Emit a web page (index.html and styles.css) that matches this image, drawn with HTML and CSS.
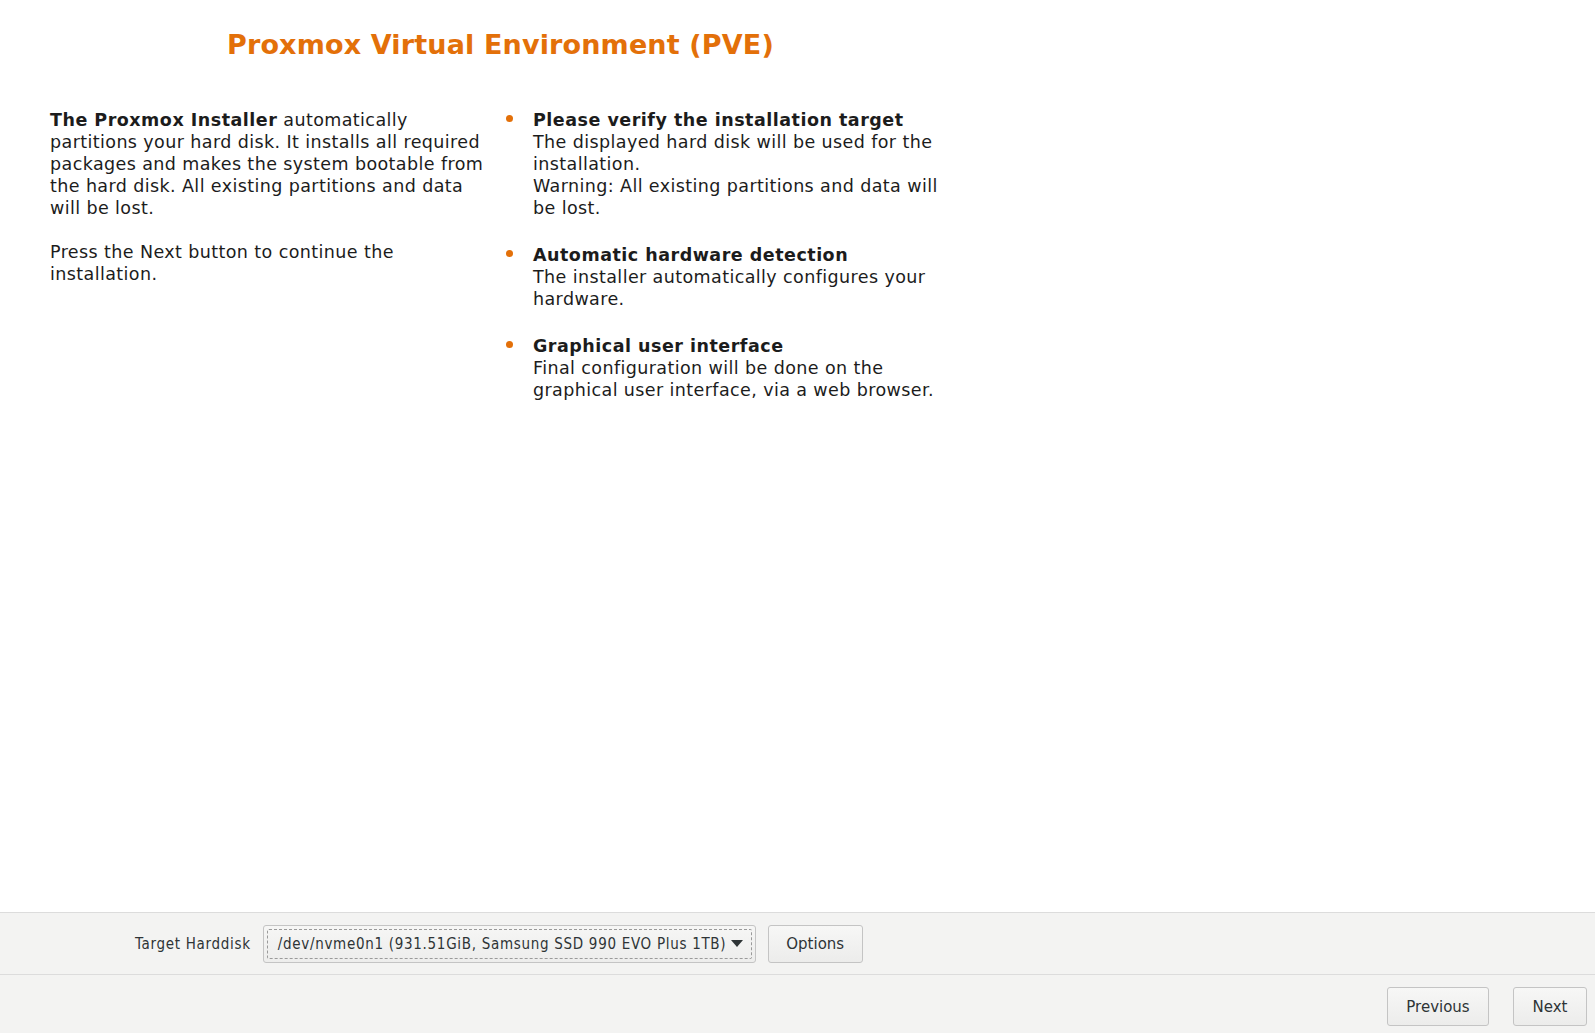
FILE: index.html
```html
<!DOCTYPE html>
<html>
<head>
<meta charset="utf-8">
<link rel="stylesheet" href="styles.css">
</head>
<body>
<div class="page">
  <main class="content">
    <h1 class="title">Proxmox Virtual Environment (PVE)</h1>
    <div class="columns">
      <div class="intro">
        <p><b>The Proxmox Installer</b> automatically partitions your hard disk. It installs all required packages and makes the system bootable from the hard disk. All existing partitions and data will be lost.</p>
        <p>Press the Next button to continue the installation.</p>
      </div>
      <ul class="features">
        <li><b>Please verify the installation target</b><br>The displayed hard disk will be used for the installation.<br>Warning: All existing partitions and data will be lost.</li>
        <li><b>Automatic hardware detection</b><br>The installer automatically configures your hardware.</li>
        <li><b>Graphical user interface</b><br>Final configuration will be done on the graphical user interface, via a web browser.</li>
      </ul>
    </div>
  </main>
  <div class="target-bar">
    <span class="label">Target Harddisk</span>
    <div class="combo"><span class="combo-inner"><span class="combo-text">/dev/nvme0n1 (931.51GiB, Samsung SSD 990 EVO Plus 1TB)</span><span class="arrow"></span></span></div>
    <button class="btn options">Options</button>
  </div>
  <div class="nav-bar">
    <button class="btn prev">Previous</button>
    <button class="btn next">Next</button>
  </div>
</div>
</body>
</html>
```
FILE: styles.css
```css
html, body {
  margin: 0;
  padding: 0;
  background: #ffffff;
}
.page {
  width: 1595px;
  height: 1033px;
  display: flex;
  flex-direction: column;
  font-family: "DejaVu Sans", sans-serif;
  color: #1c1c1c;
}
.content {
  height: 912px;
  box-sizing: border-box;
  padding: 0 0 0 50px;
}
.title {
  margin: 26px 0 0 177px;
  font-family: "DejaVu Sans", sans-serif;
  font-weight: bold;
  font-size: 27px;
  letter-spacing: 0.15px;
  line-height: 38px;
  color: #e37009;
}
.columns {
  display: flex;
  margin-top: 45px;
  font-size: 17.5px;
  letter-spacing: 0.4px;
  line-height: 22px;
}
.columns b {
  letter-spacing: 0.5px;
}
.intro {
  width: 440px;
}
.intro p {
  margin: 0 0 22px 0;
}
.features {
  list-style: none;
  margin: 0 0 0 20px;
  padding: 0 0 0 23px;
  width: 410px;
}
.features li {
  position: relative;
  margin-bottom: 25px;
}
.features li::before {
  content: "";
  position: absolute;
  left: -27px;
  top: 6px;
  width: 7px;
  height: 7px;
  border-radius: 50%;
  background: #e37009;
}
.target-bar {
  height: 63px;
  box-sizing: border-box;
  border-top: 1px solid #dcdcdc;
  border-bottom: 1px solid #dcdcdc;
  background: #f3f3f2;
  display: flex;
  align-items: center;
  padding-left: 135px;
  font-family: "DejaVu Sans Condensed", "DejaVu Sans", sans-serif;
  font-stretch: condensed;
  font-size: 15px;
  letter-spacing: 0.7px;
  color: #2e3436;
}
.label {
  margin-right: 12px;
}
.combo {
  width: 493px;
  height: 38px;
  box-sizing: border-box;
  border: 1px solid #c4c4c4;
  border-radius: 3px;
  background: linear-gradient(#f6f6f5, #ededec);
  padding: 3px;
  margin-right: 12px;
}
.combo-inner {
  display: flex;
  align-items: center;
  height: 100%;
  box-sizing: border-box;
  border: 1px dashed #9a9a9a;
  border-radius: 2px;
  padding-left: 10px;
  white-space: nowrap;
}
.arrow {
  width: 0;
  height: 0;
  border-left: 6px solid transparent;
  border-right: 6px solid transparent;
  border-top: 7px solid #2e3436;
  margin-left: 5px;
}
.btn {
  height: 38px;
  box-sizing: border-box;
  border: 1px solid #c4c4c4;
  border-radius: 3px;
  background: linear-gradient(#f7f7f6, #ececeb);
  font-family: "DejaVu Sans", sans-serif;
  font-size: 15px;
  color: #2e3436;
  padding: 0;
}
.options {
  width: 95px;
}
.nav-bar {
  flex: 1;
  background: #f3f3f2;
  display: flex;
  justify-content: flex-end;
  align-items: flex-start;
  padding: 12px 8px 0 0;
  gap: 24px;
}
.prev {
  width: 102px;
  height: 39px;
}
.next {
  width: 74px;
  height: 39px;
}
```
